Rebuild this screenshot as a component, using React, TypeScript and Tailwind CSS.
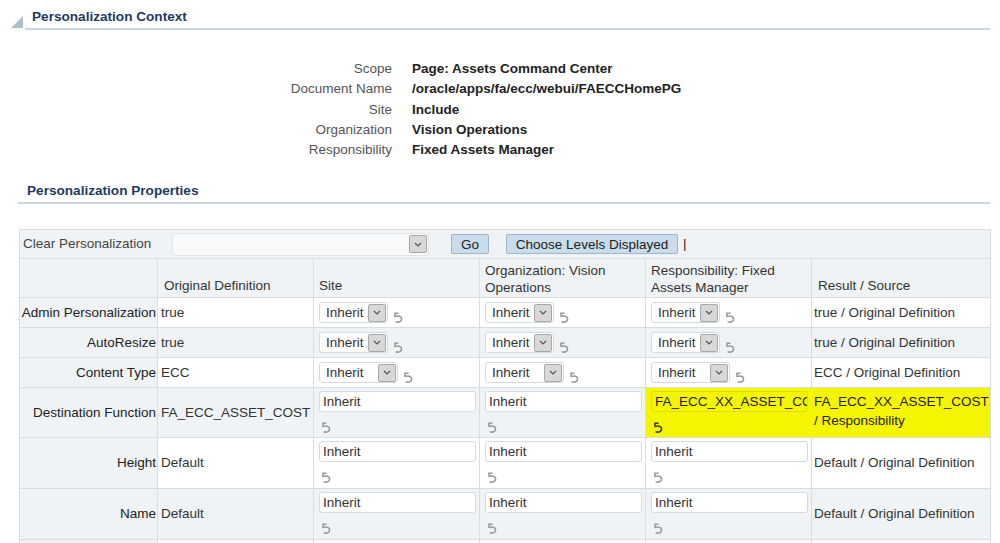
import React from 'react'

const font = "font-['Liberation_Sans',Arial,sans-serif]"

function UndoIcon({ dark = false }: { dark?: boolean }) {
  const c = dark ? '#3a3a00' : '#9a9a9a'
  return (
    <svg width="10" height="11" viewBox="0 0 10 11" className="inline-block">
      <path d="M2 0.8 L2 5 M1.2 1.2 L5.5 1.2" stroke={c} strokeWidth="1.6" fill="none" />
      <path d="M2 4.6 C5 3.2 8.6 4.4 8.6 7 C8.6 9.6 5.6 10.8 2.6 9.8" stroke={c} strokeWidth="1.6" fill="none" />
    </svg>
  )
}

function Arrow() {
  return (
    <span className="flex items-center justify-center w-[18px] h-[18px] bg-[#d8d8d8] border border-[#a8a8a8] rounded-[2px]">
      <svg width="8" height="5" viewBox="0 0 8 5"><path d="M1 1 L4 4 L7 1" stroke="#555" strokeWidth="1.2" fill="none" /></svg>
    </span>
  )
}

function SelectBox({ wide = false }: { wide?: boolean }) {
  return (
    <div className="flex items-center gap-[5px]">
      <div className={`flex items-center justify-between h-[21px] border border-[#d3dbe0] rounded-[3px] bg-white pl-[6px] pr-[1px] ${wide ? 'w-[79px]' : 'w-[69px]'}`}>
        <span className="text-[#333]">Inherit</span>
        <Arrow />
      </div>
      <div className="mt-[8px]"><UndoIcon /></div>
    </div>
  )
}

function TextCell({ value = 'Inherit', hl = false }: { value?: string; hl?: boolean }) {
  return (
    <div className="flex flex-col gap-[5px] pt-[3px]">
      <div className={`h-[21px] w-[157px] border rounded-[3px] px-[3px] leading-[19px] overflow-hidden whitespace-nowrap ${hl ? 'border-[#e0e000] bg-[#f5f500] text-[#222]' : 'border-[#d3dbe0] bg-white text-[#333]'}`}>
        {value}
      </div>
      <div className="pl-[2px] h-[14px]"><UndoIcon dark={hl} /></div>
    </div>
  )
}

const ctx = [
  ['Scope', 'Page: Assets Command Center'],
  ['Document Name', '/oracle/apps/fa/ecc/webui/FAECCHomePG'],
  ['Site', 'Include'],
  ['Organization', 'Vision Operations'],
  ['Responsibility', 'Fixed Assets Manager'],
]

function SectionTitle({ title, icon, left }: { title: string; icon?: boolean; left: string }) {
  return (
    <div className="flex items-end">
      {icon && (
        <svg width="12" height="12" viewBox="0 0 12 12" className="ml-[11px] mb-[2px]">
          <polygon points="0,12 12,12 12,0" fill="#aebfcc" />
        </svg>
      )}
      <div className={`flex-1 border-b-2 border-[#c9d7e2] ${left}`}>
        <div className="text-[13.6px] font-bold text-[#1d3b5e] leading-[16px] pb-[3px]">{title}</div>
      </div>
    </div>
  )
}

const light = 'bg-[#eff3f5]'
const cell = 'border border-[#d6dee3]'

export default function App() {
  const selRows = [
    { label: 'Admin Personalization', orig: 'true', result: 'true / Original Definition', wide: false },
    { label: 'AutoResize', orig: 'true', result: 'true / Original Definition', wide: false },
    { label: 'Content Type', orig: 'ECC', result: 'ECC / Original Definition', wide: true },
  ]
  return (
    <div className={`w-[1000px] h-[543px] overflow-hidden bg-white ${font}`}>
      <div className="pt-[9px] pr-[10px]">
        <SectionTitle title="Personalization Context" icon left="ml-[2px] pl-[7px]" />
      </div>

      {/* Context */}
      <div className="mt-[29px] flex flex-col text-[13.5px]">
        {ctx.map(([k, v]) => (
          <div key={k} className="flex h-[20.3px] items-center">
            <div className="w-[392px] text-right text-[#555]">{k}</div>
            <div className="ml-[20px] font-bold text-[#222]">{v}</div>
          </div>
        ))}
      </div>

      <div className="mt-[23px] pr-[10px]">
        <SectionTitle title="Personalization Properties" left="ml-[18px] pl-[9px]" />
      </div>

      {/* Properties table */}
      <div className="mt-[25px] ml-[19px] text-[13.5px] text-[#333]">
        <table className="border-collapse table-fixed w-[971px]">
          <colgroup>
            <col className="w-[138px]" />
            <col className="w-[156px]" />
            <col className="w-[166px]" />
            <col className="w-[166px]" />
            <col className="w-[166px]" />
            <col className="w-[179px]" />
          </colgroup>
          <tbody>
            <tr className="h-[29px]">
              <td colSpan={6} className={`${cell} ${light} px-[3px]`}>
                <div className="flex items-center">
                  <span className="w-[149px] text-[#444]">Clear Personalization</span>
                  <div className="flex items-center justify-end w-[257px] h-[23px] border border-[#dfe5e9] rounded-[3px] bg-[#f7f9fa] pr-[1px]">
                    <Arrow />
                  </div>
                  <button className="ml-[22px] h-[20px] w-[38px] border border-[#9db6cb] rounded-[2px] bg-[#c8dcec] text-[#222]">Go</button>
                  <button className="ml-[17px] h-[20px] w-[172px] border border-[#9db6cb] rounded-[2px] bg-[#c8dcec] text-[#222]">Choose Levels Displayed</button>
                  <span className="ml-[5px] text-[#222]">|</span>
                </div>
              </td>
            </tr>
            <tr className="h-[39px]">
              <td className={`${cell} ${light}`} />
              <td className={`${cell} ${light} align-bottom pl-[6px] pb-[1px]`}>Original Definition</td>
              <td className={`${cell} ${light} align-bottom pl-[5px] pb-[1px]`}>Site</td>
              <td className={`${cell} ${light} align-bottom pl-[5px] pb-[1px] leading-[17px]`}>Organization: Vision Operations</td>
              <td className={`${cell} ${light} align-bottom pl-[5px] pb-[1px] leading-[17px]`}>Responsibility: Fixed Assets Manager</td>
              <td className={`${cell} ${light} align-bottom pl-[6px] pb-[1px]`}>Result / Source</td>
            </tr>
            {selRows.map((r, i) => {
              const bg = i % 2 === 1 ? light : 'bg-white'
              return (
                <tr key={r.label} className="h-[30px]">
                  <td className={`${cell} ${light} text-right pr-[1px] text-[#222] whitespace-nowrap`}>{r.label}</td>
                  <td className={`${cell} ${bg} pl-[3px]`}>{r.orig}</td>
                  <td className={`${cell} ${bg} pl-[5px]`}><SelectBox wide={r.wide} /></td>
                  <td className={`${cell} ${bg} pl-[5px]`}><SelectBox wide={r.wide} /></td>
                  <td className={`${cell} ${bg} pl-[5px]`}><SelectBox wide={r.wide} /></td>
                  <td className={`${cell} ${bg} pl-[2px] whitespace-nowrap`}>{r.result}</td>
                </tr>
              )
            })}
            <tr className="h-[50px]">
              <td className={`${cell} ${light} text-right pr-[1px] text-[#222] whitespace-nowrap`}>Destination Function</td>
              <td className={`${cell} ${light} pl-[3px] whitespace-nowrap`}>FA_ECC_ASSET_COST</td>
              <td className={`${cell} ${light} pl-[5px] align-top`}><TextCell /></td>
              <td className={`${cell} ${light} pl-[5px] align-top`}><TextCell /></td>
              <td className={`${cell} bg-[#f5f500] pl-[5px] align-top`}><TextCell value="FA_ECC_XX_ASSET_COST" hl /></td>
              <td className={`${cell} bg-[#f5f500] pl-[2px] align-top pt-[4px] leading-[19px] text-[#222]`}>
                FA_ECC_XX_ASSET_COST
                <br />
                / Responsibility
              </td>
            </tr>
            {['Height', 'Name'].map((l, i) => {
              const bg = i % 2 === 1 ? light : 'bg-white'
              return (
                <tr key={l} className="h-[51px]">
                  <td className={`${cell} ${light} text-right pr-[1px] text-[#222]`}>{l}</td>
                  <td className={`${cell} ${bg} pl-[3px]`}>Default</td>
                  <td className={`${cell} ${bg} pl-[5px] align-top`}><TextCell /></td>
                  <td className={`${cell} ${bg} pl-[5px] align-top`}><TextCell /></td>
                  <td className={`${cell} ${bg} pl-[5px] align-top`}><TextCell /></td>
                  <td className={`${cell} ${bg} pl-[2px] whitespace-nowrap`}>Default / Original Definition</td>
                </tr>
              )
            })}
            <tr className="h-[30px]">
              <td className={`${cell} ${light}`} />
              <td className={`${cell} bg-white`} />
              <td className={`${cell} bg-white`} />
              <td className={`${cell} bg-white`} />
              <td className={`${cell} bg-white`} />
              <td className={`${cell} bg-white`} />
            </tr>
          </tbody>
        </table>
      </div>
    </div>
  )
}
